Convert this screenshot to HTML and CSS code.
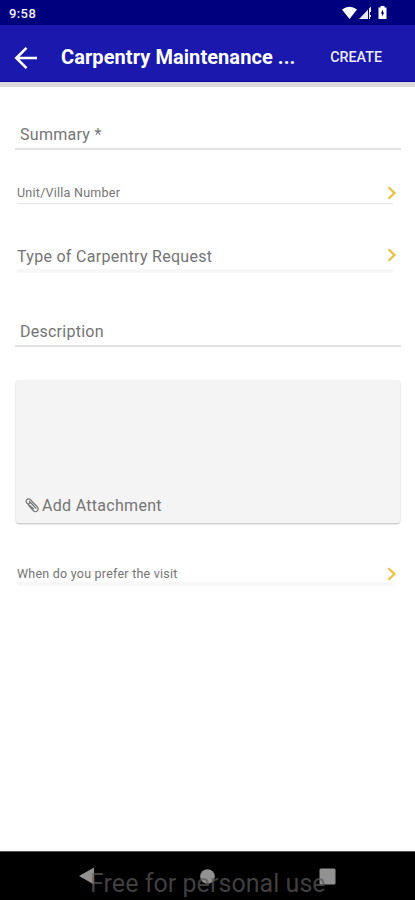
FILE: index.html
```html
<!DOCTYPE html>
<html lang="en">
<head>
<meta charset="utf-8">
<title>Carpentry Maintenance Request</title>
<link rel="stylesheet" href="styles.css">
</head>
<body>
<div class="screen">
  <div class="status">
    <span class="clock">9:58</span>
    <svg class="status-icons" width="48" height="16" viewBox="0 0 48 16" fill="#fff">
      <path d="M0 4.500Q7.500-1 15 4.500L7.500 14Z"/>
      <path d="M17 14L29 1.500V14Z" opacity=".9"/>
      <path d="M26.500 4V14" stroke="#00007f" stroke-width="1"/>
      <path d="M28.500 7V10M28.500 12V14" stroke="#00007f" stroke-width="1"/>
      <path fill-rule="evenodd" d="M36.500 2.500H38.500V1H42.500V2.500H44.500V14H36.500ZM41 4.500L38.800 8.500H40.100V11.500L42.300 7.500H41Z"/>
    </svg>
  </div>
  <header class="appbar">
    <svg class="back" width="24" height="24" viewBox="0 0 24 24" fill="none" stroke="#fff" stroke-width="2.600"><path d="M23 12H3M12.500 1.800L2.300 12L12.500 22.200"/></svg>
    <h1>Carpentry Maintenance ...</h1>
    <button class="create">CREATE</button>
  </header>
  <main class="form">
    <div class="field summary"><span>Summary *</span></div>
    <div class="picker unit"><span>Unit/Villa Number</span><svg class="chev" width="10" height="14" viewBox="0 0 10 14"><path d="M1.500 1.200L7.500 7L1.500 12.800"/></svg></div>
    <div class="picker type"><span>Type of Carpentry Request</span><svg class="chev" width="10" height="14" viewBox="0 0 10 14"><path d="M1.500 1.200L7.500 7L1.500 12.800"/></svg></div>
    <div class="field description"><span>Description</span></div>
    <div class="card">
      <svg class="clip" width="14" height="15" viewBox="0 0 14 15" fill="none" stroke="#777" stroke-width="1.200" stroke-linecap="round"><path d="M8.500 10.800L2 5.200C-.3 2.800 2.700-.4 5.200 1.500L12 8.500C14.800 11.800 11.300 15.600 8.400 12.800L4 7.800C2.500 5.800 5 4 6.500 5.500L11 10.300M4.500 3.500L8.500 7.500"/></svg>
      <span>Add Attachment</span>
    </div>
    <div class="picker visit"><span>When do you prefer the visit</span><svg class="chev" width="10" height="14" viewBox="0 0 10 14"><path d="M1.500 1.200L7.500 7L1.500 12.800"/></svg></div>
  </main>
  <nav class="navbar">
    <svg width="16" height="18" viewBox="0 0 16 18"><path d="M0 9L15 .5V17.500Z"/></svg>
    <svg width="15" height="15" viewBox="0 0 15 15"><circle cx="7.500" cy="7.500" r="7.300"/></svg>
    <svg width="17" height="17" viewBox="0 0 17 17"><rect x=".5" y=".5" width="16" height="16" rx="1.500"/></svg>
    <span class="watermark">Free for personal use</span>
  </nav>
</div>
</body>
</html>
```
FILE: styles.css
```css
* { box-sizing: border-box; }
body { margin: 0; background: #fff; font-family: Roboto, "Liberation Sans", sans-serif; color: #747474; }
.screen { width: 415px; height: 900px; display: flex; flex-direction: column; overflow: hidden; }
span, h1, button { white-space: nowrap; }
.status { height: 25px; background: #00007f; display: flex; justify-content: space-between; align-items: center; padding: 1px 25px 0 9px; flex: none; }
.clock { color: #f4f4ff; font-size: 13px; font-weight: 500; line-height: 16px; letter-spacing: .4px; padding-top: 1px; }
.appbar { height: 57px; flex: none; background: #1a18ad; border-bottom: 1px solid #0b0898; box-shadow: 0 5px 0 #dcdadd; display: flex; align-items: center; padding: 7px 33px 0 14px; color: #fff; }
.back { flex: none; margin-top: 2px; }
h1 { margin: 0 0 0 23px; font-size: 20px; line-height: 24px; font-weight: 700; letter-spacing: .07px; flex: 1; }
.create { border: 0; padding: 0; background: none; color: #ececff; font: 500 14.3px/20px Roboto, sans-serif; }
.form { flex: 1; display: flex; flex-direction: column; padding: 35px 14px 0 15px; }
.field { height: 33px; border-bottom: 2px solid #e2e2e2; padding: 8px 0 0 5px; font-size: 16px; letter-spacing: .28px; line-height: 20px; flex: none; }
.picker { display: flex; justify-content: space-between; margin: 0 4px 0 2px; flex: none; background: linear-gradient(#f7f7f7, #f7f7f7) left bottom / 376px 4px no-repeat; }
.unit { margin-top: 33px; height: 21px; font-size: 12.5px; letter-spacing: .25px; line-height: 20px; background: linear-gradient(#e4e4e4, #e4e4e4) left bottom / 376px 1px no-repeat; }
.type { margin-top: 42px; height: 27px; font-size: 16px; letter-spacing: .29px; line-height: 22px; }
.description { margin-top: 41px; letter-spacing: .25px; }
.card { margin: 33px 1px 0; height: 143px; flex: none; border-radius: 3px; background: #f4f4f4; box-shadow: 0 1px 2px #bcbcbc; display: flex; align-items: flex-end; padding: 0 9px 7px; font-size: 16px; letter-spacing: .3px; line-height: 20px; }
.clip { margin: 0 3px 3px 0; }
.visit { margin-top: 41px; height: 22px; font-size: 12.5px; letter-spacing: .23px; line-height: 20px; }
.chev { fill: none; stroke: #eabf3a; stroke-width: 2.2; margin-top: 3px; }
.type .chev { margin-top: 2px; }
.navbar { height: 49px; flex: none; background: #000; border-top: 1px solid #555; display: flex; justify-content: space-between; padding: 0 79px; align-items: center; position: relative; fill: #929292; }
.watermark { position: absolute; left: 90px; top: 17px; font-size: 25px; line-height: 30px; letter-spacing: .05px; color: rgba(90, 90, 90, .72); }
```
